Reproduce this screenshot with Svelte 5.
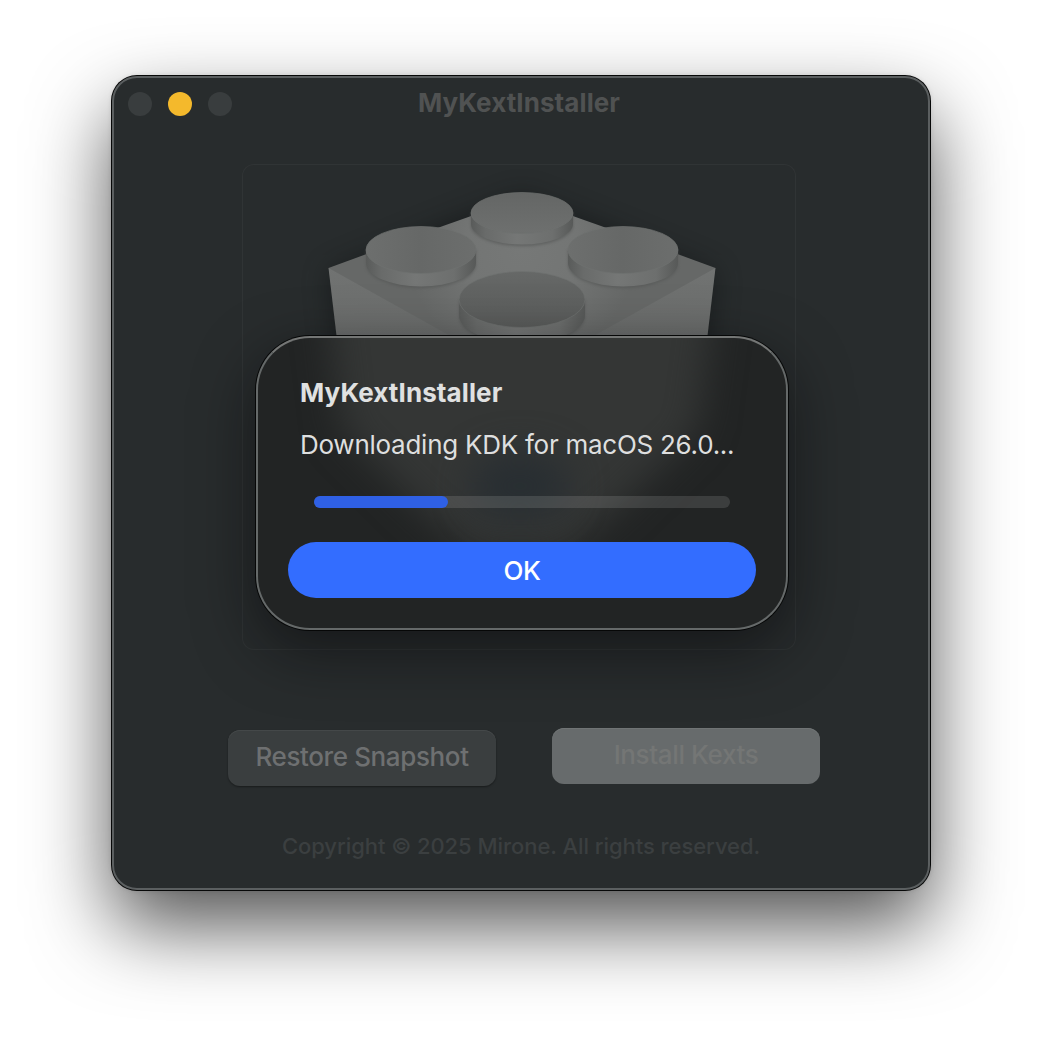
<script lang="ts">
  const progress = 32.2;
  const studs = [
    { cx: 522, cy: 213, rx: 51, ry: 20.5, h: 11, face: 'url(#faceBack)' },
    { cx: 421, cy: 250, rx: 55, ry: 23.5, h: 13, face: 'url(#faceSide)' },
    { cx: 623, cy: 250, rx: 55, ry: 23.5, h: 13, face: 'url(#faceSide)' },
    { cx: 522, cy: 299.5, rx: 63, ry: 28, h: 15.5, face: 'url(#faceFront)' },
  ];
</script>

<main class="desktop">
  <section class="window">
    <header class="titlebar">
      <div class="lights">
        <span class="light"></span>
        <span class="light minimize"></span>
        <span class="light"></span>
      </div>
      <h1>MyKextInstaller</h1>
    </header>

    <div class="preview">
      <svg viewBox="242 164 554 486" width="554" height="486" aria-hidden="true">
        <defs>
          <radialGradient id="topPlane" cx="522" cy="250" r="190" gradientUnits="userSpaceOnUse">
            <stop offset="0" stop-color="#767877" />
            <stop offset=".3" stop-color="#737574" />
            <stop offset=".6" stop-color="#666867" />
            <stop offset="1" stop-color="#666867" />
          </radialGradient>
          <linearGradient id="leftSide" x1="0" y1="268" x2="0" y2="345" gradientUnits="userSpaceOnUse">
            <stop offset="0" stop-color="#717372" />
            <stop offset="1" stop-color="#696b6a" />
          </linearGradient>
          <linearGradient id="rim" x1="0" x2="1" y1="0" y2="0">
            <stop offset="0" stop-color="#595b5a" />
            <stop offset=".14" stop-color="#696b6a" />
            <stop offset=".45" stop-color="#757776" />
            <stop offset=".8" stop-color="#6d6f6e" />
            <stop offset="1" stop-color="#575958" />
          </linearGradient>
          <linearGradient id="faceBack" x1="0" x2="0" y1="0" y2="1">
            <stop offset="0" stop-color="#646665" />
            <stop offset="1" stop-color="#6e706f" />
          </linearGradient>
          <linearGradient id="faceSide" x1="0" x2="1" y1="0" y2="0">
            <stop offset="0" stop-color="#6d6f6e" />
            <stop offset=".5" stop-color="#666867" />
            <stop offset="1" stop-color="#6c6e6d" />
          </linearGradient>
          <linearGradient id="faceFront" x1="0" x2="0" y1="0" y2="1">
            <stop offset="0" stop-color="#666867" />
            <stop offset="1" stop-color="#595b5a" />
          </linearGradient>
          <filter id="soft" x="-30%" y="-30%" width="160%" height="160%" color-interpolation-filters="sRGB">
            <feGaussianBlur stdDeviation="13" />
          </filter>
          <filter id="contact" x="-10%" y="-10%" width="120%" height="120%" color-interpolation-filters="sRGB">
            <feGaussianBlur stdDeviation="1.5" />
          </filter>
        </defs>
        <path class="brick-shadow" filter="url(#soft)" d="M328 272 440 226 522 194 604 226 716 272 700 440 522 590 344 440Z" />
        <path fill="url(#leftSide)" d="M328.500 268H715.500L694 450 522 580 350 450Z" />
        <path fill="url(#topPlane)" d="M328.500 268 443 226 522 198 601 226 715.500 268 522 376Z" />
        {#each studs as s}
          <path class="stud-shadow" filter="url(#contact)" d="M{s.cx - s.rx} {s.cy}v{s.h + 1.5}a{s.rx} {s.ry} 0 0 0 {s.rx * 2} 0v{-s.h - 1.5}Z" />
          <path fill="url(#rim)" d="M{s.cx - s.rx} {s.cy}v{s.h}a{s.rx} {s.ry} 0 0 0 {s.rx * 2} 0v{-s.h}Z" />
          <ellipse class="face" cx={s.cx} cy={s.cy} rx={s.rx} ry={s.ry} fill={s.face} />
        {/each}
      </svg>
    </div>

    <div class="actions">
      <button class="restore">Restore Snapshot</button>
      <button class="install">Install Kexts</button>
    </div>
    <footer>Copyright © 2025 Mirone. All rights reserved.</footer>

    <div class="dialog" role="alertdialog">
      <svg class="glow" viewBox="0 0 528 290" width="528" height="290" aria-hidden="true">
        <defs>
          <filter id="glass" x="-50%" y="-80%" width="200%" height="260%" color-interpolation-filters="sRGB">
            <feGaussianBlur stdDeviation="18" />
          </filter>
        </defs>
        <path filter="url(#glass)" fill="#343635" d="M66-60H460L440 92 362 168 308 215H216L160 168 84 92Z" />
        <ellipse filter="url(#glass)" cx="262" cy="148" rx="50" ry="34" fill="#282e32" />
      </svg>
      <div class="content">
        <h2>MyKextInstaller</h2>
        <p>Downloading KDK for macOS 26.0...</p>
        <div class="track"><div class="bar" style="width: {progress}%"></div></div>
        <button class="ok">OK</button>
      </div>
    </div>
  </section>
</main>

<style>
  :global(body) {
    background: #fff;
    overflow: hidden;
  }
  .desktop {
    box-sizing: border-box;
    width: 1042px;
    height: 1038px;
    padding: 76px 112px 0;
    font-family: Inter, 'Liberation Sans', sans-serif;
  }
  .window {
    box-sizing: border-box;
    position: relative;
    display: flex;
    flex-direction: column;
    align-items: center;
    width: 818px;
    height: 814px;
    overflow: visible;
    border: 2px solid #5b5f60;
    border-radius: 25px;
    background: #282c2d;
    box-shadow:
      0 0 0 1px #070808,
      0 0 5px rgba(0, 0, 0, 0.15),
      0 36px 80px rgba(0, 0, 0, 0.68);
  }
  h1,
  h2,
  p {
    margin: 0;
    white-space: nowrap;
  }
  .titlebar {
    display: grid;
    grid-template-columns: 1fr auto 1fr;
    align-items: center;
    box-sizing: border-box;
    width: 100%;
    height: 52px;
    padding: 0 18px 0 14px;
  }
  .lights {
    display: flex;
    gap: 16px;
  }
  .light {
    width: 24px;
    height: 24px;
    border-radius: 50%;
    background: #393d3e;
  }
  .light.minimize {
    background: #f4b92c;
  }
  h1 {
    padding-bottom: 2px;
    font-size: 26px;
    line-height: 30px;
    font-weight: 700;
    letter-spacing: 0.08px;
    color: #505252;
  }
  .preview {
    box-sizing: border-box;
    width: 554px;
    height: 486px;
    margin: 34px 4px 0 0;
    overflow: hidden;
    border-radius: 12px;
    box-shadow: inset 0 0 0 1px #303435;
  }
  .preview svg {
    display: block;
  }
  .brick-shadow {
    fill: #101314;
    opacity: 0.55;
  }
  .stud-shadow {
    fill: #555756;
    opacity: 0.7;
  }
  .face {
    stroke: #6f7170;
    stroke-width: 0.7;
  }
  .actions {
    display: flex;
    align-items: flex-start;
    gap: 56px;
    margin: 78px 0 0 6px;
  }
  button {
    border: 0;
    padding: 0;
    font-family: inherit;
    white-space: nowrap;
  }
  .actions button {
    width: 268px;
    height: 56px;
    padding-bottom: 4px;
    border-radius: 12px;
    font-size: 26px;
    font-weight: 500;
    letter-spacing: -0.38px;
  }
  .restore {
    margin-top: 2px;
    background: #3a3e3f;
    color: #6e7071;
    box-shadow:
      inset 0 1px 0 #444849,
      0 1px 2px rgba(0, 0, 0, 0.4);
  }
  .install {
    background: #676b6c;
    color: #747675;
    box-shadow: inset 0 1px 0 #707475;
  }
  footer {
    margin-top: 45px;
    font-size: 22px;
    line-height: 30px;
    font-weight: 500;
    letter-spacing: -0.06px;
    color: #3b3f40;
    white-space: nowrap;
  }
  .dialog {
    box-sizing: border-box;
    position: absolute;
    left: 142px;
    top: 258px;
    width: 532px;
    height: 294px;
    border: 2px solid #656969;
    border-top-color: #747675;
    border-radius: 54px;
    background: #222424;
    box-shadow:
      0 0 0 1px #060707,
      0 20px 60px rgba(8, 8, 10, 0.55);
  }
  .glow {
    position: absolute;
    inset: 0;
    border-radius: 52px;
  }
  .content {
    position: relative;
    display: flex;
    flex-direction: column;
    padding: 39px 30px 30px;
  }
  h2 {
    margin-left: 12px;
    font-size: 26px;
    line-height: 32px;
    font-weight: 700;
    letter-spacing: 0.1px;
    color: #e0e1e1;
  }
  p {
    margin: 20px 0 0 12px;
    font-size: 26px;
    line-height: 32px;
    font-weight: 400;
    letter-spacing: -0.26px;
    color: #dedfdf;
  }
  .track {
    height: 12px;
    margin: 35px 26px 34px;
    border-radius: 6px;
    background: rgba(255, 255, 255, 0.12);
  }
  .bar {
    height: 100%;
    border-radius: 6px;
    background: #2f60e5;
  }
  .ok {
    height: 56px;
    border-radius: 28px;
    background: #336dff;
    color: #fff;
    font-size: 26px;
    font-weight: 500;
    letter-spacing: -0.5px;
  }
</style>
